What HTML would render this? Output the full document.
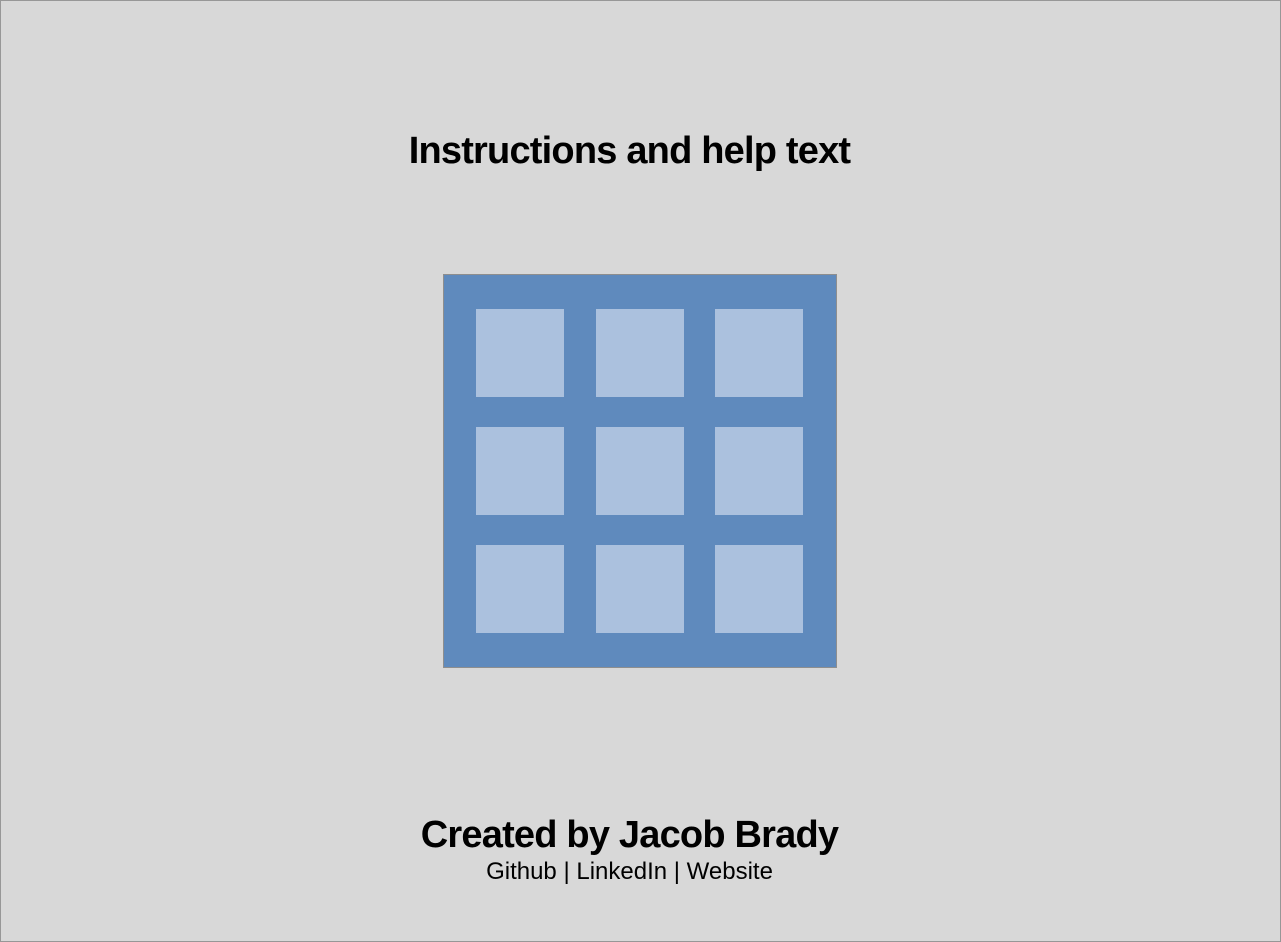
<!DOCTYPE html>
<html><head><style>
body{margin:0;width:1281px;height:942px;overflow:hidden;background:#d8d8d8;font-family:"Liberation Sans",Arial,sans-serif;}
.frame{position:absolute;left:0;top:0;width:1279px;height:940px;border:1px solid #979797;}
.t{position:absolute;left:0;width:1259px;text-align:center;color:#000;white-space:nowrap;}
.grid{position:absolute;left:443px;top:274px;width:392px;height:392px;background:#5f8abd;border:1px solid #8e8e8e;}
.c{position:absolute;width:88px;height:88px;background:#abc1de;}
</style></head><body>
<div class="frame"></div>
<div class="t" style="top:130px;font-size:38px;font-weight:bold;letter-spacing:-0.8px;">Instructions and help text</div>
<div class="grid">
<div class="c" style="left:32px;top:34px"></div><div class="c" style="left:152px;top:34px"></div><div class="c" style="left:271px;top:34px"></div>
<div class="c" style="left:32px;top:152px"></div><div class="c" style="left:152px;top:152px"></div><div class="c" style="left:271px;top:152px"></div>
<div class="c" style="left:32px;top:270px"></div><div class="c" style="left:152px;top:270px"></div><div class="c" style="left:271px;top:270px"></div>
</div>
<div class="t" style="top:814px;font-size:38px;font-weight:bold;letter-spacing:-0.8px;">Created by Jacob Brady</div>
<div class="t" style="top:858px;font-size:24px;">Github | LinkedIn | Website</div>
</body></html>
